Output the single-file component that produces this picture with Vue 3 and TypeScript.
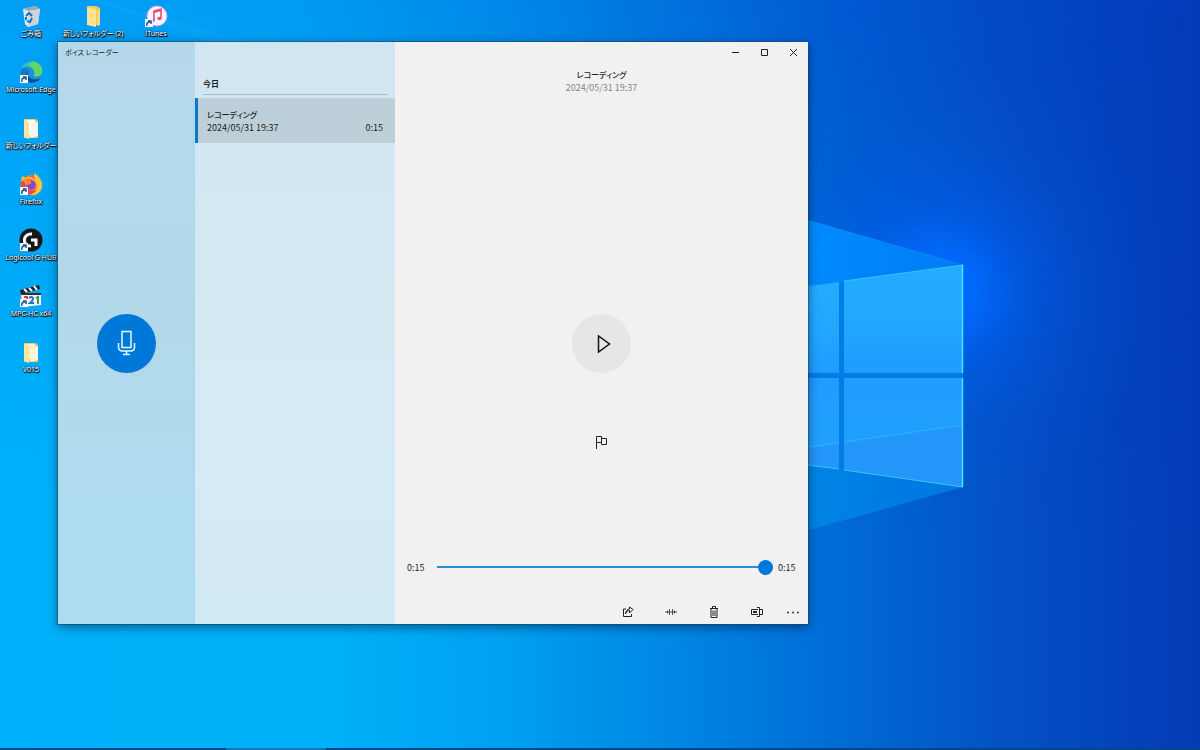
<script setup lang="ts">
import { ref } from 'vue'

interface Shortcut {
  label: string
  icon: string
  col: number
  row: number
  linked?: boolean
}

const shortcuts: Shortcut[] = [
  { label: 'ごみ箱', icon: 'bin', col: 1, row: 1 },
  { label: '新しいフォルダー (2)', icon: 'folder', col: 2, row: 1 },
  { label: 'iTunes', icon: 'itunes', col: 3, row: 1, linked: true },
  { label: 'Microsoft Edge', icon: 'edge', col: 1, row: 2, linked: true },
  { label: '新しいフォルダー', icon: 'files', col: 1, row: 3 },
  { label: 'Firefox', icon: 'firefox', col: 1, row: 4, linked: true },
  { label: 'Logicool G HUB', icon: 'ghub', col: 1, row: 5, linked: true },
  { label: 'MPC-HC x64', icon: 'mpc', col: 1, row: 6, linked: true },
  { label: 'V015', icon: 'pages', col: 1, row: 7 },
]

const recording = { name: 'レコーディング', date: '2024/05/31 19:37', length: '0:15' }
const position = ref(15)
</script>

<template>
  <main class="desktop">
    <svg class="wallpaper" viewBox="0 0 1200 750" preserveAspectRatio="none" aria-hidden="true">
      <defs>
        <linearGradient id="skyTop">
          <stop offset="0" stop-color="#00a0f6" />
          <stop offset=".25" stop-color="#009cf2" />
          <stop offset=".42" stop-color="#0088e8" />
          <stop offset=".58" stop-color="#006edb" />
          <stop offset=".71" stop-color="#0058d2" />
          <stop offset=".84" stop-color="#0449c6" />
          <stop offset="1" stop-color="#033bb8" />
        </linearGradient>
        <linearGradient id="skyBottom">
          <stop offset="0" stop-color="#00b2fb" />
          <stop offset=".28" stop-color="#00b0f8" />
          <stop offset=".42" stop-color="#00a0f0" />
          <stop offset=".58" stop-color="#0083e2" />
          <stop offset=".71" stop-color="#0069d4" />
          <stop offset=".84" stop-color="#0450c5" />
          <stop offset="1" stop-color="#033bb5" />
        </linearGradient>
        <linearGradient id="fade" x2="0" y2="1">
          <stop offset="0" stop-color="#000" />
          <stop offset=".7" stop-color="#fff" />
        </linearGradient>
        <mask id="lower"><rect width="1200" height="750" fill="url(#fade)" /></mask>
        <radialGradient id="glow" gradientUnits="userSpaceOnUse" cx="0" cy="0" r="1" gradientTransform="translate(940 290) scale(230 220)">
          <stop offset="0" stop-color="#006cff" />
          <stop offset=".16" stop-color="#006aff" stop-opacity=".9" />
          <stop offset=".4" stop-color="#0060f0" stop-opacity=".42" />
          <stop offset=".7" stop-color="#005ae0" stop-opacity=".14" />
          <stop offset="1" stop-color="#0058dc" stop-opacity="0" />
        </radialGradient>
        <linearGradient id="beamUp">
          <stop offset="0" stop-color="#0090ff" />
          <stop offset="1" stop-color="#007cff" stop-opacity=".6" />
        </linearGradient>
        <linearGradient id="beamDown">
          <stop offset="0" stop-color="#008ae6" />
          <stop offset="1" stop-color="#0070de" stop-opacity=".5" />
        </linearGradient>
        <linearGradient id="paneTop" x2="0" y2="1">
          <stop offset="0" stop-color="#22acff" />
          <stop offset=".5" stop-color="#22a8ff" />
          <stop offset="1" stop-color="#209cff" />
        </linearGradient>
        <linearGradient id="paneBottom" x2="0" y2="1">
          <stop offset="0" stop-color="#209cff" />
          <stop offset="1" stop-color="#22a2fb" />
        </linearGradient>
      </defs>
      <rect width="1200" height="750" fill="url(#skyTop)" />
      <rect width="1200" height="750" fill="url(#skyBottom)" mask="url(#lower)" />
      <path d="M90 0 210 42H250L100 0Z" fill="#22adf8" opacity=".2" />
      <rect x="700" y="60" width="480" height="460" fill="url(#glow)" />
      <path d="M780 212 963 265 963 487 780 538Z" fill="#007ee6" />
      <path d="M780 212 963 265 780 291Z" fill="url(#beamUp)" />
      <path d="M780 212 963 265" stroke="#2099f5" stroke-opacity=".4" />
      <path d="M780 461 963 487 780 538Z" fill="url(#beamDown)" />
      <path d="M780 290 839 282V373H780Z" fill="url(#paneTop)" />
      <path d="M844 281 963 265V373H844Z" fill="url(#paneTop)" />
      <path d="M780 378H839V469L780 462Z" fill="url(#paneBottom)" />
      <path d="M844 378H963V487L844 470Z" fill="url(#paneBottom)" />
      <path d="M780 451 839 443V469L780 462Z M844 442 963 425V487L844 470Z" fill="#2496fa" />
      <path d="M780 451 839 443M844 442 963 425" stroke="#26b8ff" fill="none" />
      <path d="M844 281 963 265M808 465 839 469M844 470 963 487" stroke="#36c4ff" fill="none" />
      <path d="M962.500 265V373M962.500 378V487" stroke="#48e4ff" stroke-width="1.500" />
    </svg>

    <nav class="icons" aria-label="デスクトップ">
      <a
        v-for="item in shortcuts"
        :key="item.label"
        href="#"
        class="shortcut"
        :style="{ gridColumn: item.col, gridRow: item.row }"
      >
        <svg class="glyph" viewBox="0 0 24 24" aria-hidden="true">
          <g v-if="item.icon === 'bin'">
            <path d="M4 5 16 2 21 5 19 20 9 23 6 20Z" fill="#e2e8ee" />
            <path d="M4 5 10 7 21 5 16 2Z" fill="#9ba7b0" />
            <path d="M10 7 21 5 19 20 9 23Z" fill="#cdd5dc" />
            <path d="M7 12 10 9 13 12M13 14 11 18 8 17M7 16V13" fill="none" stroke="#1673c4" stroke-width="2" />
          </g>
          <g v-else-if="item.icon === 'folder'">
            <path d="M6 2H15L19 4V21H6Z" fill="#f0c75c" />
            <path d="M6 3 15 5V23L6 21Z" fill="#ffe394" />
            <path d="M16 6H19V21L16 22Z" fill="#f8d878" />
          </g>
          <g v-else-if="item.icon === 'itunes'">
            <circle cx="13" cy="12" r="10" fill="#f8f6fb" stroke="#d9a3e4" />
            <path d="M10 16V7L17 5V14" fill="none" stroke="#e64b83" stroke-width="1.600" />
            <path d="M10 8 17 6" stroke="#e64b83" stroke-width="2" />
            <ellipse cx="8.500" cy="16.500" rx="2.200" ry="1.700" fill="#8f62e0" />
            <ellipse cx="15.500" cy="14.500" rx="2.200" ry="1.700" fill="#e6517b" />
          </g>
          <g v-else-if="item.icon === 'edge'">
            <circle cx="12.500" cy="12" r="11" fill="#1d8fd6" />
            <path d="M2 9C5 -1 20 -1 23 9C24.500 15 20 17.500 16 16.500C14 16 15.500 14 15 12C13 6 6 5 2 9Z" fill="#2cc3c9" />
            <path d="M14 1.200C21 2 25 9 22.500 14C20.500 17 15 17 14.500 15.500C17 13 15 7 9 5.500Z" fill="#62d765" />
            <path d="M9.500 9.500C5 13 8 22 15 22.700C8 25 1 19 1.500 12C3 8 7 8 9.500 9.500Z" fill="#1579c9" />
            <path d="M10 10C6 15 11 22 21.500 18.500C19 22 14 23.500 11 22C6 19 6 13 10 10Z" fill="#154a94" />
          </g>
          <g v-else-if="item.icon === 'files' || item.icon === 'pages'">
            <path d="M5 3H17L19 5V22H5Z" fill="#efc663" />
            <path d="M8 4H16V20L8 21Z" :fill="item.icon === 'files' ? '#ffffff' : '#fff2c4'" />
            <path d="M12 7 19 6V20L12 22Z" :fill="item.icon === 'files' ? '#f3f6f8' : '#fff7d9'" />
            <path d="M5 3 10 6V23L5 21Z" fill="#ffe59a" />
          </g>
          <g v-else-if="item.icon === 'firefox'">
            <circle cx="12" cy="13" r="10" fill="#ff6d2a" />
            <path d="M2 10 3 4 7 6C10 3 13 6 16 8L15 1C20 4 24 9 23 15C22 21 16 24 12 23C17 20 20 15 16 9L10 6Z" fill="#ffc43a" />
            <path d="M2 10C3 24 13 24 18 18C15 20 8 19 6 13L7 7Z" fill="#f43f54" />
            <circle cx="12" cy="13" r="4.500" fill="#7a48dc" />
            <path d="M3 8C7 5 13 8 12 12L8 13Z" fill="#ff8a27" />
          </g>
          <g v-else-if="item.icon === 'ghub'">
            <circle cx="12" cy="12" r="11.500" fill="#15171a" />
            <path d="M13 6C3 5 3 19 12 18" fill="none" stroke="#fff" stroke-width="3" />
            <path d="M12 12H17V18" fill="none" stroke="#fff" stroke-width="3" />
          </g>
          <g v-else-if="item.icon === 'mpc'">
            <path d="M1 6 20 1 21 5 2 10Z" fill="#22272b" />
            <path d="M5 5 8 8M10 4 13 7M15 2 18 6" stroke="#fff" stroke-width="2" />
            <path d="M2 9H22V21L3 23Z" fill="#f5f5f5" />
            <path d="M2 9H22V11H2Z" fill="#2c3135" />
            <path d="M5 13H8V20" fill="none" stroke="#d84936" stroke-width="2" />
            <path d="M10 14C14 11 16 15 11 19H15" fill="none" stroke="#2471c8" stroke-width="2" />
            <path d="M17 14 19 13V20" fill="none" stroke="#3e9a4c" stroke-width="2" />
          </g>
          <g v-if="item.linked">
            <path d="M1 15H9V23H1Z" fill="#f6f9fc" />
            <path d="M3 22C2 19 4 18 6 18M4 17H7V20" fill="none" stroke="#21548f" stroke-width="1.500" />
          </g>
        </svg>
        <span class="caption">{{ item.label }}</span>
      </a>
    </nav>

    <section class="window" aria-label="ボイス レコーダー">
      <aside class="record">
        <h1 class="app-name">ボイス レコーダー</h1>
        <button class="mic" type="button" aria-label="録音">
          <svg width="19" height="26" viewBox="0 0 19 26" aria-hidden="true">
            <path d="M5 1.500H14V17.500H5ZM1.500 13V17Q1.500 21 5.500 21H13.500Q17.500 21 17.500 17V13M9.500 21V24M6 24.500H13" />
          </svg>
        </button>
      </aside>

      <section class="list" aria-label="録音一覧">
        <h2 class="group">今日</h2>
        <button class="entry" type="button">
          <span class="entry-name">{{ recording.name }}</span>
          <span class="entry-info">
            <span>{{ recording.date }}</span>
            <span>{{ recording.length }}</span>
          </span>
        </button>
      </section>

      <section class="detail">
        <div class="controls">
          <button type="button" aria-label="最小化">
            <svg width="9" height="9" viewBox="0 0 9 9"><path d="M1 4.500H8" /></svg>
          </button>
          <button type="button" aria-label="最大化">
            <svg width="9" height="9" viewBox="0 0 9 9"><path d="M1.500 1.500H7.500V7.500H1.500Z" /></svg>
          </button>
          <button type="button" aria-label="閉じる">
            <svg width="9" height="9" viewBox="0 0 9 9"><path d="M1 1 8 8M8 1 1 8" /></svg>
          </button>
        </div>

        <header class="heading">
          <h2>{{ recording.name }}</h2>
          <p>{{ recording.date }}</p>
        </header>

        <div class="stage">
          <button class="play" type="button" aria-label="再生">
            <svg width="20" height="22" viewBox="0 0 20 22"><path d="M4.500 3V19L15.500 11Z" /></svg>
          </button>
        </div>

        <button class="flag" type="button" aria-label="マーカーを追加">
          <svg width="14" height="14" viewBox="0 0 14 14">
            <path d="M1.500 14V1.500H6.500V7.500H1.500M6.500 3.500H11.500V9.500H6.500V7.500" />
          </svg>
        </button>

        <div class="timeline">
          <span>0:15</span>
          <input v-model.number="position" type="range" min="0" max="15" aria-label="再生位置" />
          <span>{{ recording.length }}</span>
        </div>

        <footer class="toolbar">
          <button type="button" aria-label="共有">
            <svg width="12" height="12" viewBox="0 0 12 12">
              <path d="M4 3H1.500V10.500H9.500V8M3.500 8Q4 4.500 7.500 4.500V7L11 3.500 7.500 1V3Q4 3 3.500 8Z" />
            </svg>
          </button>
          <button type="button" aria-label="トリミング">
            <svg width="12" height="12" viewBox="0 0 12 12">
              <path d="M0 6H12M2.500 4.500V7.500M4.500 3V9M7.500 3V9M9.500 4.500V7.500" stroke-opacity=".75" />
            </svg>
          </button>
          <button type="button" aria-label="削除">
            <svg width="12" height="12" viewBox="0 0 12 12">
              <path d="M2 2.500H10M4.500 2V.500H7.500V2M3 3V11.500H9V3M5 4.500V10M7 4.500V10" />
            </svg>
          </button>
          <button type="button" aria-label="名前の変更">
            <svg width="12" height="12" viewBox="0 0 12 12">
              <path d="M7 3.500H.500V8.500H7M9 3.500H11.500V8.500H9M2 5.500H6M2 6.500H6M6 1.500H8.500V10.500H6" />
            </svg>
          </button>
          <button class="more" type="button" aria-label="その他">
            <svg width="14" height="12" viewBox="0 0 14 12">
              <circle cx="2" cy="6.500" r=".9" /><circle cx="7" cy="6.500" r=".9" /><circle cx="12" cy="6.500" r=".9" />
            </svg>
          </button>
        </footer>
      </section>
    </section>

    <div class="taskbar"><span></span></div>
  </main>
</template>

<style>
body {
  margin: 0;
  overflow: hidden;
}
</style>

<style scoped>
.desktop {
  position: relative;
  height: 100vh;
  overflow: hidden;
  font-family: "Noto Sans CJK JP", "Noto Sans", sans-serif;
  font-feature-settings: "palt";
  font-size: 9px;
  line-height: 13px;
  color: #1c1f22;
}
.wallpaper {
  position: absolute;
  inset: 0;
  width: 100%;
  height: 100%;
}
h1,
h2,
p {
  margin: 0;
  font-weight: 400;
}
button {
  display: flex;
  align-items: center;
  justify-content: center;
  padding: 0;
  border: 0;
  background: none;
  color: inherit;
  font: inherit;
  font-feature-settings: inherit;
}
button svg {
  fill: none;
  stroke: #222;
  stroke-width: 1;
}
.icons {
  position: relative;
  display: grid;
  grid-template-columns: 62px 62px 64px;
  grid-auto-rows: 56px;
  padding-top: 4px;
}
.shortcut {
  display: flex;
  flex-direction: column;
  align-items: center;
  color: #fff;
  text-decoration: none;
}
.glyph {
  width: 24px;
  height: 24px;
}
.caption {
  font-family: "Noto Sans", "Noto Sans CJK JP", sans-serif;
  font-size: 7px;
  line-height: 12px;
  white-space: nowrap;
  text-shadow: 0 1px 1px #000, 0 0 2px #000, 1px 1px 1px #000;
}
.window {
  position: absolute;
  top: 42px;
  left: 58px;
  display: grid;
  grid-template-columns: 137px 200px 1fr;
  width: 62.5%;
  height: 77.6%;
  background: #f1f1f1;
  box-shadow: 0 0 0 1px rgba(24, 70, 100, 0.55), 0 3px 10px rgba(0, 20, 50, 0.55);
}
.record {
  display: grid;
  grid-template-rows: 20px 1fr;
  background: linear-gradient(#b4d8e9, #b1d9ea 50%, #addcf0);
}
.app-name {
  padding-left: 7px;
  font-size: 7px;
  line-height: 20px;
}
.mic,
.play {
  width: 59px;
  height: 59px;
  border-radius: 50%;
}
.mic {
  place-self: center;
  background: #0078d9;
}
.mic svg {
  stroke: #e8f7ff;
  stroke-width: 1.5;
}
.list {
  background: linear-gradient(#d2e6f1, #d5e9f3 50%, #d2eaf4);
}
.group {
  margin: 32px 7px 3px 8px;
  padding-bottom: 1px;
  border-bottom: 1px solid #a9bfcb;
  font-size: 8px;
  font-weight: 700;
  line-height: 19px;
}
.entry {
  flex-direction: column;
  align-items: stretch;
  width: 100%;
  height: 45px;
  padding: 0 12px 0 9px;
  border-left: 3px solid #0a78cc;
  background: #bdd0da;
  text-align: left;
}
.entry-name,
.heading h2 {
  font-size: 8px;
  font-weight: 500;
}
.entry-info {
  display: flex;
  justify-content: space-between;
}
.detail {
  display: grid;
  grid-template-rows: 20px 31px 1fr 124px 30px 42px;
  min-width: 0;
}
.controls {
  display: flex;
  justify-content: flex-end;
}
.controls button {
  width: 29px;
}
.heading {
  padding-top: 6px;
  text-align: center;
}
.heading p {
  color: #858585;
}
.stage {
  display: flex;
  align-items: flex-end;
  justify-content: center;
  padding-bottom: 55px;
}
.play {
  background: #e6e6e6;
}
.play svg {
  margin-left: 4px;
  stroke: #111;
  stroke-width: 1.5;
}
.flag {
  place-self: start center;
  height: 28px;
}
.timeline {
  display: grid;
  grid-template-columns: 18px 1fr 18px;
  align-items: center;
  gap: 5px;
  padding: 0 12px;
}
.timeline input {
  appearance: none;
  min-width: 0;
  height: 16px;
  margin: 0 0 0 7px;
  background: linear-gradient(#2b8fd4, #2b8fd4) center / 100% 2px no-repeat;
}
.timeline input::-webkit-slider-thumb {
  appearance: none;
  width: 15px;
  height: 15px;
  border-radius: 50%;
  background: #0078d9;
}
.toolbar {
  display: flex;
  justify-content: flex-end;
  padding-top: 18px;
}
.toolbar button {
  width: 43px;
}
.toolbar .more {
  width: 30px;
}
.toolbar .more svg {
  fill: #222;
  stroke: none;
}
.taskbar {
  position: absolute;
  inset: auto 0 0;
  height: 2px;
  background: #064684;
}
.taskbar span {
  display: block;
  width: 100px;
  height: 2px;
  margin-left: 226px;
  background: #1a75b5;
}
</style>
